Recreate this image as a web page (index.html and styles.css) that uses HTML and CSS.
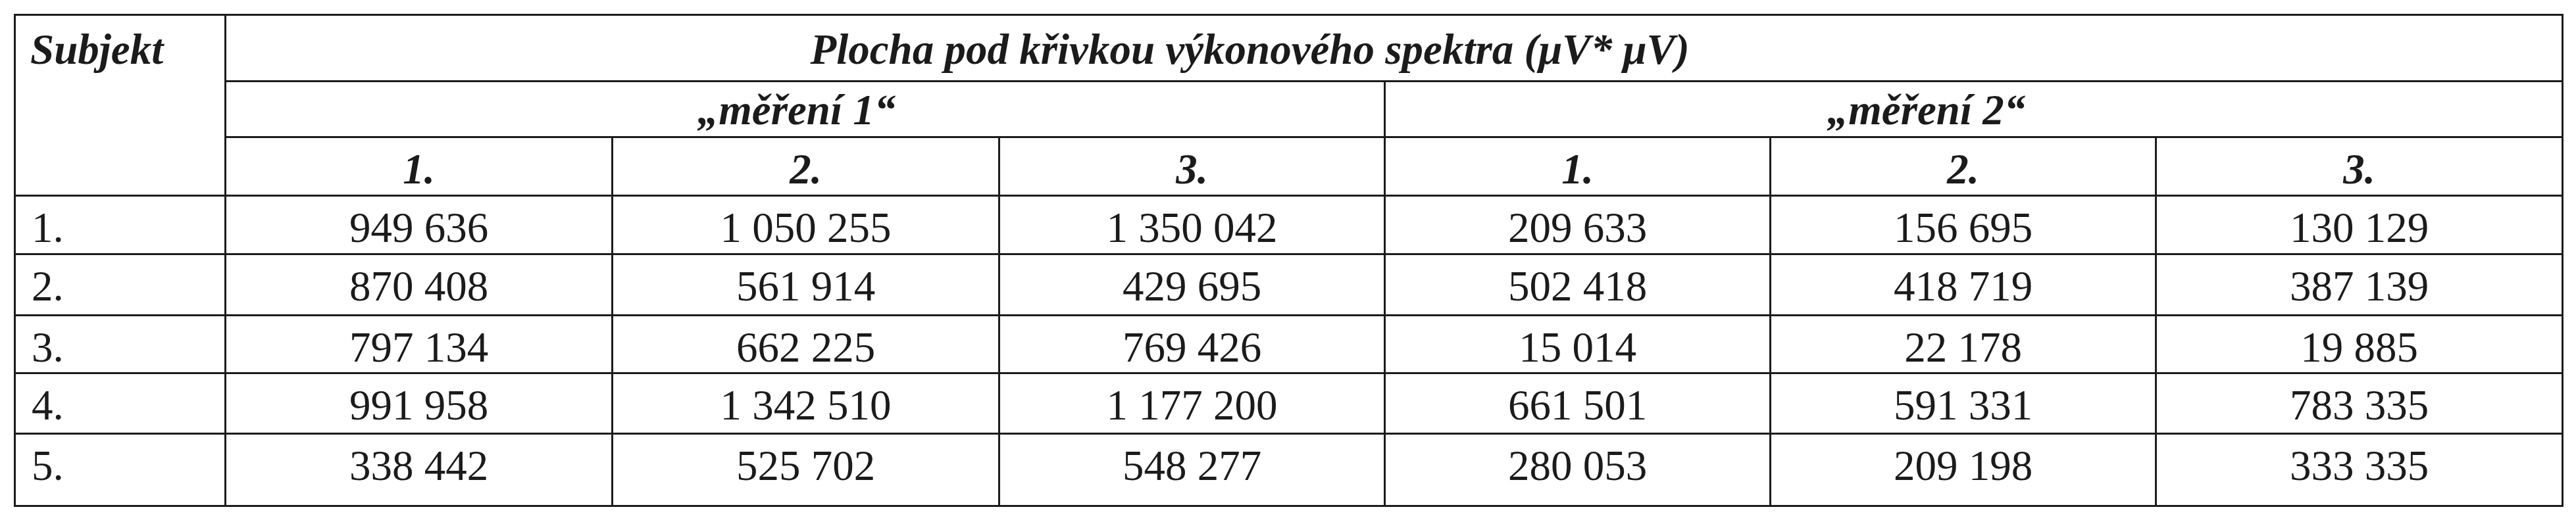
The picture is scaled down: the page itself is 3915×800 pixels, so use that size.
FILE: index.html
```html
<!DOCTYPE html>
<html lang="cs">
<head>
<meta charset="utf-8">
<title>Plocha pod křivkou výkonového spektra</title>
<link rel="stylesheet" href="styles.css">
</head>
<body>
<div class="page">
<table class="data">
  <colgroup>
    <col class="c-subj">
    <col class="c-a"><col class="c-a"><col class="c-b">
    <col class="c-b"><col class="c-b"><col class="c-last">
  </colgroup>
  <thead>
    <tr class="h1">
      <th rowspan="3" class="subj">Subjekt</th>
      <th colspan="6" class="title">Plocha pod křivkou výkonového spektra (μV* μV)</th>
    </tr>
    <tr class="h2">
      <th colspan="3" class="m1">„měření 1“</th>
      <th colspan="3" class="m2">„měření 2“</th>
    </tr>
    <tr class="h3">
      <th>1.</th><th>2.</th><th>3.</th>
      <th>1.</th><th>2.</th><th>3.</th>
    </tr>
  </thead>
  <tbody>
    <tr class="r r1"><td class="n">1.</td><td>949 636</td><td>1 050 255</td><td>1 350 042</td><td>209 633</td><td>156 695</td><td>130 129</td></tr>
    <tr class="r r2"><td class="n">2.</td><td>870 408</td><td>561 914</td><td>429 695</td><td>502 418</td><td>418 719</td><td>387 139</td></tr>
    <tr class="r r3"><td class="n">3.</td><td>797 134</td><td>662 225</td><td>769 426</td><td>15 014</td><td>22 178</td><td>19 885</td></tr>
    <tr class="r r4"><td class="n">4.</td><td>991 958</td><td>1 342 510</td><td>1 177 200</td><td>661 501</td><td>591 331</td><td>783 335</td></tr>
    <tr class="r r5"><td class="n">5.</td><td>338 442</td><td>525 702</td><td>548 277</td><td>280 053</td><td>209 198</td><td>333 335</td></tr>
  </tbody>
</table>
</div>
</body>
</html>
```

FILE: styles.css
```css
html, body {
  margin: 0;
  padding: 0;
  background: #ffffff;
}

.page {
  padding: 21px 0 0 21px;
}

.data {
  border-collapse: collapse;
  table-layout: fixed;
  width: 3872px;
  font-family: "Liberation Serif", "Times New Roman", serif;
  font-size: 65px;
  line-height: 74px;
  color: #1b1b1b;
}

.c-subj { width: 320px; }
.c-a { width: 588px; }
.c-b { width: 586px; }
.c-last { width: 618px; }

.data th,
.data td {
  border: 3px solid #1c1c1c;
  padding: 0;
  vertical-align: top;
  text-align: center;
  white-space: nowrap;
}

.data th {
  font-weight: bold;
  font-style: italic;
}

.data th.subj {
  text-align: left;
  padding-left: 22px;
  padding-top: 14px;
}

.h1 { height: 101px; }
.h1 th.title { padding-top: 14px; padding-right: 438px; }

.h2 { height: 85px; }
.h2 th { padding-top: 5px; }
.h2 th.m1 { padding-right: 26px; }
.h2 th.m2 { padding-right: 144px; }

.h3 { height: 89px; }
.h3 th { padding-top: 10px; }

.r td { padding-top: 10px; font-weight: normal; }
.r1 { height: 89px; }
.r2 { height: 93px; }
.r3 { height: 88px; }
.r4 { height: 92px; }
.r5 { height: 110px; }

.data td.n {
  text-align: left;
  padding-left: 24px;
}
```
